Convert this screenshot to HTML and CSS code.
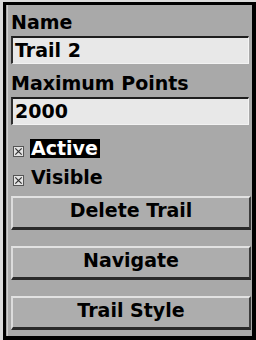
FILE: index.html
```html
<!DOCTYPE html>
<html lang="en">
  <head>
    <meta charset="UTF-8" />
    <meta name="viewport" content="width=device-width, initial-scale=1.0" />
    <title>Trail</title>
    <link rel="stylesheet" href="styles.css">
  </head>
  <body>
    <div class="frame">
      <div class="panel">
        <div class="label">Name</div>
        <div class="field">Trail 2</div>
        <div class="label label-gap">Maximum Points</div>
        <div class="field">2000</div>

        <div class="check first">
          <svg class="box" viewBox="0 0 11 11" width="11" height="11">
            <rect x="0.5" y="0.5" width="10" height="10" fill="#e4e4e4" stroke="#555" />
            <path d="M2.3 2.3L8.7 8.7M8.7 2.3L2.3 8.7" stroke="#333" stroke-width="1.2" />
          </svg>
          <span class="check-text selected">Active</span>
        </div>
        <div class="check">
          <svg class="box" viewBox="0 0 11 11" width="11" height="11">
            <rect x="0.5" y="0.5" width="10" height="10" fill="#e4e4e4" stroke="#555" />
            <path d="M2.3 2.3L8.7 8.7M8.7 2.3L2.3 8.7" stroke="#333" stroke-width="1.2" />
          </svg>
          <span class="check-text">Visible</span>
        </div>

        <div class="button first-button">Delete Trail</div>
        <div class="button">Navigate</div>
        <div class="button">Trail Style</div>
      </div>
    </div>
  </body>
</html>
```

FILE: styles.css
```css
body {
  margin: 0;
  padding: 0;
  background-color: #dadada;
  font-family: "DejaVu Sans", sans-serif;
  font-weight: bold;
  font-size: 19px;
  color: #000;
}

.frame {
  box-sizing: border-box;
  width: 253px;
  height: 338px;
  margin: 2px 0 0 3px;
  border: 3px solid #000;
  border-right-width: 4px;
  border-bottom-width: 4px;
}

.panel {
  display: flex;
  flex-direction: column;
  height: 100%;
  box-sizing: border-box;
  padding: 6px 1px 0 5px;
  background-color: #a9a9a9;
  box-shadow: inset 1px 0 0 #a9a9a9, inset 2px 0 0 #cdcdcd;
}

.label {
  line-height: 22px;
  white-space: nowrap;
}

.label-gap {
  margin-top: 8px;
}

.field {
  margin-top: 3px;
  margin-right: 2px;
  padding: 1px 2px 2px 2px;
  line-height: 22px;
  background-color: #e8e8e8;
  border-top: 2px solid #1e1e1e;
  border-left: 2px solid #2e2e2e;
  border-bottom: 1px solid #f2f2f2;
  border-right: 1px solid #f4f4f4;
}

.check {
  display: flex;
  align-items: flex-end;
  padding-left: 2px;
  margin-top: 10px;
}

.check.first {
  margin-top: 14px;
}

.box {
  margin: 0 6px 1px 0;
  flex-shrink: 0;
}

.check-text {
  line-height: 19px;
  padding: 0 2px 0 1px;
}

.selected {
  background-color: #000;
  color: #fff;
}

.button {
  margin-top: 16px;
  padding: 1px 0 6px 0;
  line-height: 22px;
  text-align: center;
  background-color: #adadad;
  border-top: 2px solid #e2e2e2;
  border-left: 2px solid #dcdcdc;
  border-right: 2px solid #3c3c3c;
  border-bottom: 3px solid #2a2a2a;
}

.first-button {
  margin-top: 9px;
}
```
